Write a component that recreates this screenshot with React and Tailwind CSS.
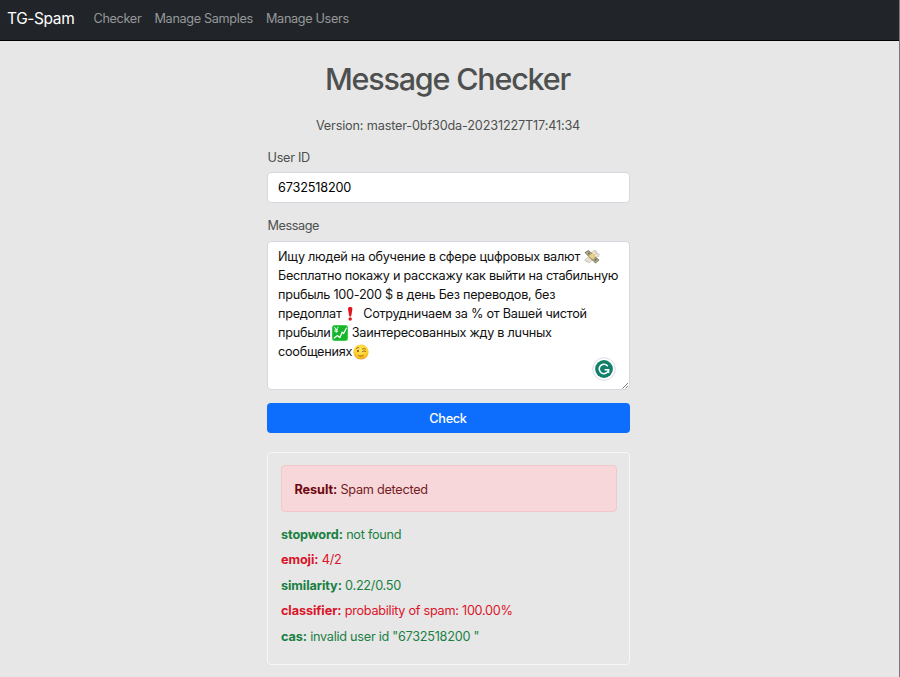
import React from 'react';

const MoneyWings = () => (
  <svg viewBox="0 0 16 16" className="ml-px inline-block h-4 w-4 shrink-0">
    <path d="M7.500 4C8.500 1.600 10.500.8 12.200 1.700c-.2.600-.6.900-1 1.100.8-.1 1.500 0 2.100.3-.2.600-.7.900-1.200 1 .6.1 1 .4 1.300.9L10 7z" fill="#e6e1d2" stroke="#a6a190" strokeWidth=".4" />
    <path d="M5.500 8.500C3.500 8 1.500 9.300.6 11.600c.7.200 1.200.1 1.700-.1-.2.700-.1 1.200.1 1.700.7 0 1.200-.3 1.600-.6.1.700.5 1.100 1 1.300L8.500 11z" fill="#e6e1d2" stroke="#a6a190" strokeWidth=".4" />
    <path d="M.5 3.600 4.400 1l11 9.900-3.900 3.600z" fill="#77775a" />
    <path d="m1.600 3.700 2.700-1.800 9.900 9-2.700 2.500z" fill="#b5b293" />
    <path d="m4.800 7 3.900-3 3.200 3-3.500 3.300z" fill="#efcf79" />
    <circle cx="4.800" cy="4.500" r=".9" fill="#66694e" />
    <circle cx="11.500" cy="10.700" r="1.100" fill="#66694e" />
    <path d="M10 6.500c2-2.300 3.900-2.300 5.600-1.300-.2.700-.7 1-1.200 1.100.4.200.7.500.8.900-.6.500-1.500.4-2 .2l-1.500.8z" fill="#ebe7da" stroke="#a6a190" strokeWidth=".4" />
  </svg>
);

const Exclamation = () => (
  <svg viewBox="0 0 16 16" className="inline-block h-4 w-4 shrink-0">
    <path d="M6 3c0-1.400.8-2 2.200-2s2.200.6 2.200 2l-1 6.300c-.1.900-.5 1.200-1.200 1.200s-1.100-.3-1.200-1.200z" fill="#e3151c" />
    <circle cx="8.200" cy="13" r="1.700" fill="#e3151c" />
  </svg>
);

const YenChart = () => (
  <svg viewBox="0 0 16 16" className="ml-px inline-block h-4 w-4 shrink-0">
    <rect x=".2" y=".2" width="15.600" height="15.600" rx="2.400" fill="#17b52c" />
    <rect x=".7" y=".7" width="14.600" height="14.600" rx="2" fill="none" stroke="#2dd13d" strokeWidth=".6" />
    <path d="m2.300 1.900 2 2.800 2-2.800M4.300 4.700v3M2.500 4.900h3.600M2.500 6.300h3.600" fill="none" stroke="#fff" strokeWidth=".9" />
    <path d="m2.200 13 3.300-2.500 2.400 2.200 2.200-5.500 1.500 1.300 2.700-5.300" fill="none" stroke="#fff" strokeWidth="1.200" strokeLinejoin="round" strokeLinecap="round" />
  </svg>
);

const Wink = () => (
  <svg viewBox="0 0 16 16" className="ml-px inline-block h-4 w-4 shrink-0">
    <defs>
      <radialGradient id="face" cx=".5" cy=".35" r=".65">
        <stop offset="0" stopColor="#ffe95a" />
        <stop offset=".7" stopColor="#fdcb2e" />
        <stop offset="1" stopColor="#ee9b18" />
      </radialGradient>
    </defs>
    <circle cx="8" cy="8" r="7.600" fill="url(#face)" />
    <ellipse cx="5" cy="7" rx=".9" ry="1.100" fill="#6b3b0b" />
    <path d="M9.500 7.400c.8-.6 2.300-.6 3.200.1M3.300 4.600c.6-.8 1.500-1.100 2.400-.9M9.400 5c1-.4 2-.4 2.900 0M5.600 11.500c1.500.9 3.300.8 4.700-.1" fill="none" stroke="#80480d" strokeWidth=".8" strokeLinecap="round" />
  </svg>
);

const AssistantBadge = () => (
  <svg viewBox="0 0 24 24" className="absolute right-[13px] bottom-[8px] h-6 w-6">
    <circle cx="12" cy="12" r="11.300" fill="#fff" stroke="#d9dce8" strokeWidth="1" />
    <circle cx="12" cy="12" r="8.900" fill="#11806a" />
    <path d="M15.400 8.700A4.700 4.700 0 1 0 16.400 13.500" fill="none" stroke="#fff" strokeWidth="1.500" strokeLinecap="round" />
    <path d="M12.600 12.700h4v3.300" fill="none" stroke="#fff" strokeWidth="1.500" />
  </svg>
);

const ResizeGrip = () => (
  <svg viewBox="0 0 8 8" className="absolute right-0 bottom-0 h-2 w-2">
    <path d="M1.500 7.500 7 2M4.500 7.500 7 5" stroke="#666" strokeWidth=".9" />
  </svg>
);

const checks = [
  { name: 'stopword', text: 'not found', spam: false },
  { name: 'emoji', text: '4/2', spam: true },
  { name: 'similarity', text: '0.22/0.50', spam: false },
  { name: 'classifier', text: 'probability of spam: 100.00%', spam: true },
  { name: 'cas', text: 'invalid user id "6732518200 "', spam: false },
];

export default function App() {
  return (
    <div className="h-[677px] w-[900px] overflow-hidden border-r border-[#77797b] bg-[#e7e7e7] font-['Inter','Liberation_Sans',sans-serif] text-[12.700px] tracking-[-0.170px] text-[#4d504f]">
      <nav className="flex h-[41px] items-center border-b border-black bg-[#212529] pb-[3px] pl-[7px] tracking-[-0.350px] text-[#969899]">
        <a className="w-[86.500px] text-[15.500px] tracking-[-0.400px] text-white">TG-Spam</a>
        <a className="w-[61px]">Checker</a>
        <a className="w-[111.500px]">Manage Samples</a>
        <a>Manage Users</a>
      </nav>
      <main className="mr-[269px] ml-[267px] flex flex-col">
        <h1 className="mt-[19px] pr-[2px] text-center text-[30.500px] leading-[38px] font-medium tracking-[-1.200px] whitespace-nowrap">Message Checker</h1>
        <p className="mt-[18px] pr-px text-center leading-[20px]">Version: master-0bf30da-20231227T17:41:34</p>
        <label className="mt-[12px] pl-[0.500px] leading-[20px] tracking-[-0.300px]">User ID</label>
        <div className="mt-[4px] flex h-[31px] items-center rounded-[4px] border border-[#d5d9df] bg-white pl-[10px] text-black">6732518200</div>
        <label className="mt-[13px] pl-[0.500px] leading-[20px] tracking-[-0.450px]">Message</label>
        <div className="relative mt-[5px] h-[149px] rounded-[4px] border border-[#d5d9df] bg-white pt-[5px] pl-[10px] tracking-[-0.270px] whitespace-pre text-[#111]">
          <div className="flex h-[19px] items-center"><span>Ищу людей на обучение в сфере цuфровых валют </span><MoneyWings /></div>
          <div className="flex h-[19px] items-center"><span>Бесплатно покажу и расскажу как выйти на стабильную</span></div>
          <div className="flex h-[19px] items-center"><span>прuбыль 100-200 $ в день Без переводов, без</span></div>
          <div className="flex h-[19px] items-center"><span>предоплат</span><Exclamation /><span className="-ml-px">  Сотрудничаем за % от Вашей чистой</span></div>
          <div className="flex h-[19px] items-center"><span>прuбыли</span><YenChart /><span className="pl-px"> Заинтересованных жду в лuчных</span></div>
          <div className="flex h-[19px] items-center"><span>сообщениях</span><Wink /></div>
          <AssistantBadge />
          <ResizeGrip />
        </div>
        <button className="mt-[13px] h-[30px] rounded-[4px] bg-[#0d6efd] pt-px pr-px font-medium tracking-[-0.300px] text-white">Check</button>
        <section className="mt-[19px] h-[213px] rounded-[4px] border border-[#f7f7f7] px-[12.500px] py-[12px] tracking-[-0.270px]">
          <div className="flex h-[47px] items-center rounded-[4px] border border-[#f5c6cb] bg-[#f8d7da] pt-[2px] pl-[13px] text-[#721c24]">
            <span><strong className="font-bold tracking-[-0.080px] text-[#6d0711]">Result:</strong> Spam detected</span>
          </div>
          <div className="mt-[10px] pl-[0.500px]">
            {checks.map((c) => (
              <p key={c.name} className={c.spam ? 'h-[25.400px] leading-[25.400px] text-[#dc1429]' : 'h-[25.400px] leading-[25.400px] text-[#198043]'}>
                <strong className="font-bold tracking-[-0.100px]">{c.name}:</strong> {c.text}
              </p>
            ))}
          </div>
        </section>
      </main>
    </div>
  );
}
